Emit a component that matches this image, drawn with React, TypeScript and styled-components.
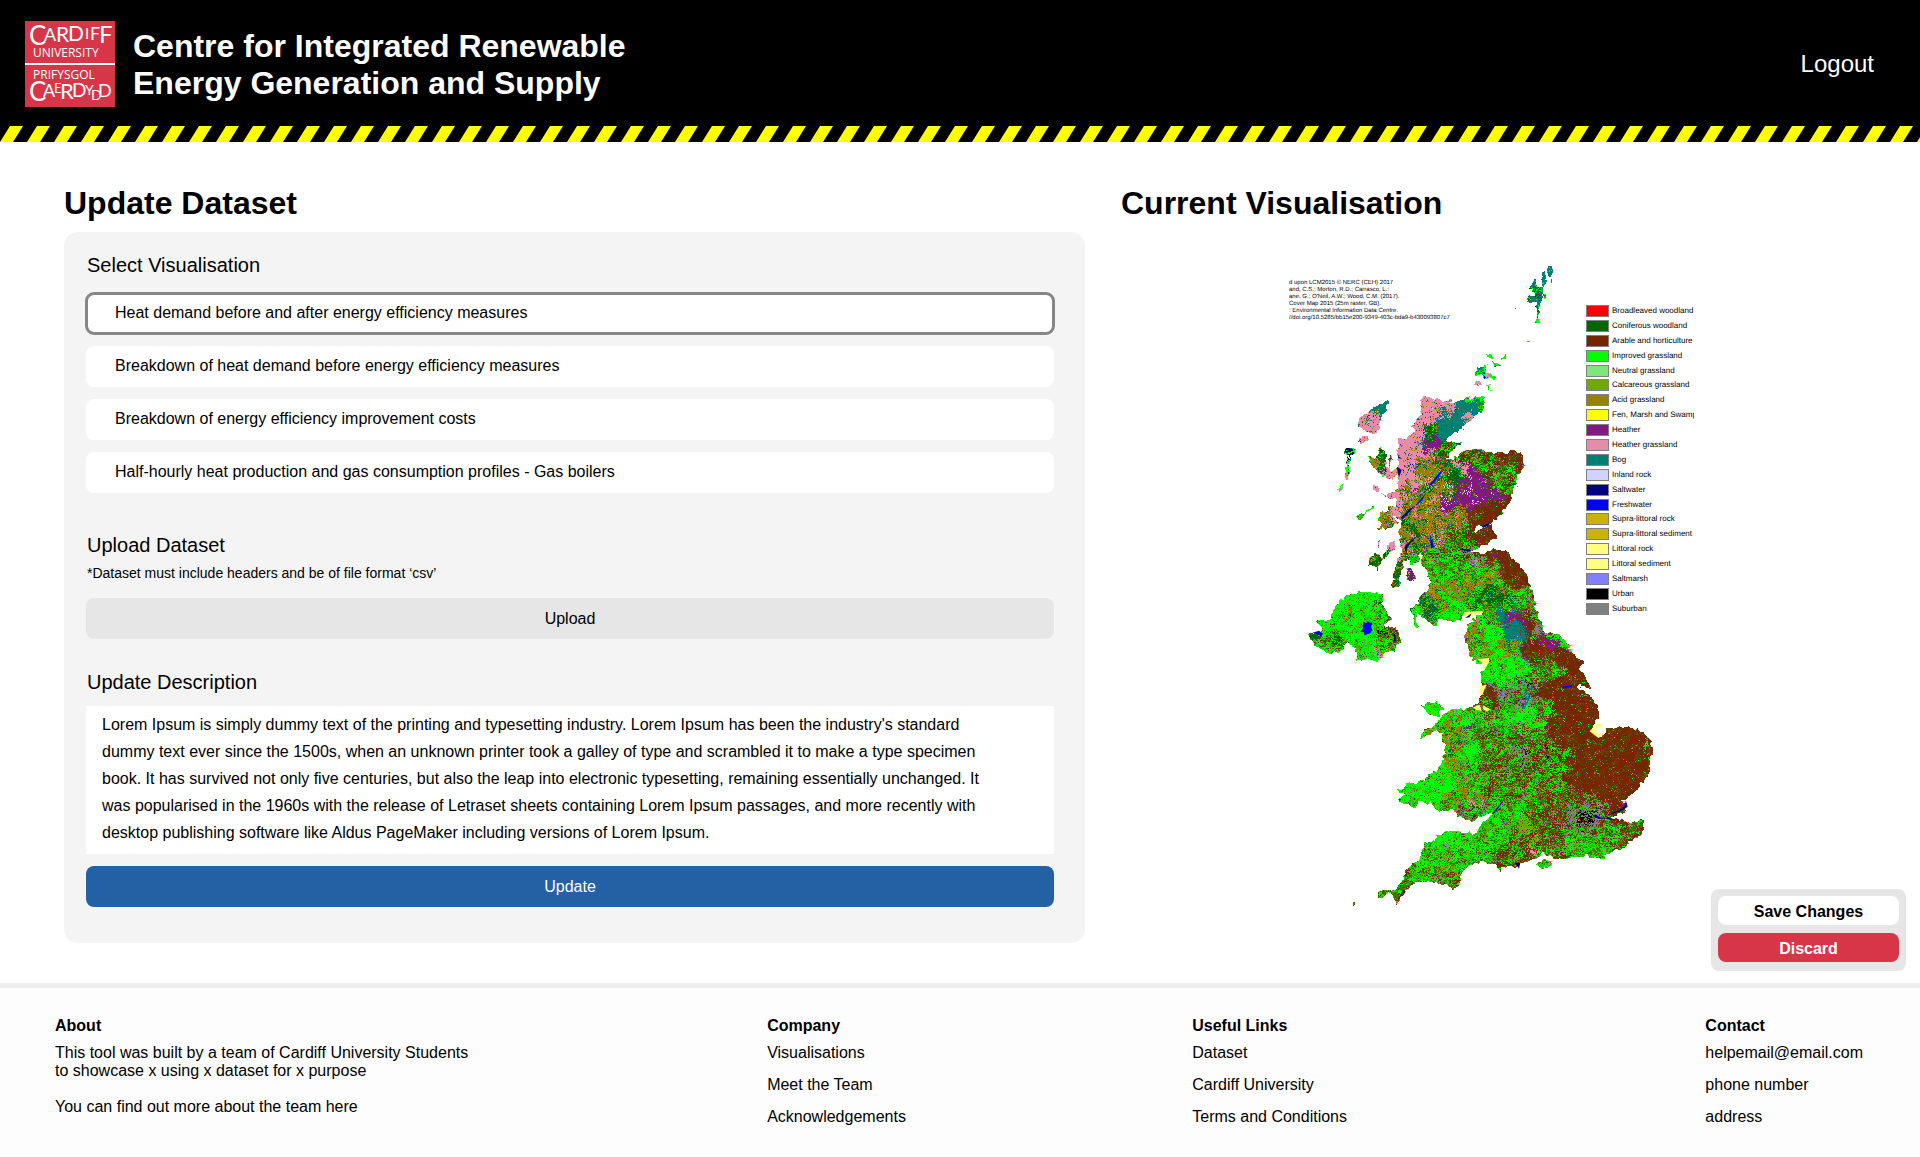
import React, { useMemo, useState } from "react";
import styled, { createGlobalStyle, css } from "styled-components";

const GlobalStyle = createGlobalStyle`
  *, *::before, *::after { box-sizing: border-box; }
  body {
    margin: 0;
    background: #ffffff;
    color: #000000;
    font-family: "Liberation Sans", Arial, Helvetica, sans-serif;
    font-size: 16px;
    line-height: 18px;
  }
  h1, h2, h3, p, ul, figure, fieldset { margin: 0; padding: 0; }
  ul { list-style: none; }
  fieldset { border: 0; min-width: 0; }
  button, textarea { font: inherit; color: inherit; border: 0; }
  a { color: inherit; text-decoration: none; }
`;

/* ---------- header ---------- */

const Header = styled.header`
  display: flex;
  align-items: center;
  gap: 18px;
  padding: 21px 46px 18px 25px;
  background: #000000;
  color: #ffffff;
`;

const SiteTitle = styled.h1`
  flex: 1;
  padding-top: 2px;
  font-size: 32px;
  line-height: 37px;
`;

const LogoutLink = styled.a`
  font-size: 24px;
  line-height: 28px;
`;

const LogoDrawing = styled.svg`
  display: block;
  flex: none;
  font-family: Lato, "Open Sans", sans-serif;
  fill: #ffffff;
`;

const Tape = styled.svg`
  display: block;
  width: 100%;
  height: 17px;
`;

function Logo() {
  return (
    <LogoDrawing width="90" height="86" viewBox="0 0 90 86" role="img" aria-label="Cardiff University">
      <rect width="90" height="86" fill="#d73648" />
      <rect y="42" width="90" height="2" />
      <text y="24" fontSize="26">
        <tspan x="4">C</tspan>
        <tspan fontSize="18" y="20" x="19">A</tspan>
        <tspan fontSize="21" y="21" x="31">R</tspan>
        <tspan fontSize="21" y="20" x="43">D</tspan>
        <tspan fontSize="15" y="18" x="60">I</tspan>
        <tspan fontSize="18" y="19" x="65">F</tspan>
        <tspan fontSize="24" y="22" x="74">F</tspan>
      </text>
      <text x="8" y="36" fontSize="12" fontFamily="Open Sans">UNIVERSITY</text>
      <text x="8" y="58" fontSize="12" fontFamily="Open Sans">PRIFYSGOL</text>
      <text y="80" fontSize="26">
        <tspan x="4">C</tspan>
        <tspan fontSize="18" y="76" x="18">A</tspan>
        <tspan fontSize="13" y="72" x="29">E</tspan>
        <tspan fontSize="22" y="78" x="35">R</tspan>
        <tspan fontSize="19" y="76" x="47">D</tspan>
        <tspan fontSize="14" y="74" x="60">Y</tspan>
        <tspan fontSize="14" y="79" x="66">D</tspan>
        <tspan fontSize="18" y="76" x="73">D</tspan>
      </text>
    </LogoDrawing>
  );
}

function HazardTape() {
  return (
    <Tape aria-hidden="true">
      <defs>
        <pattern id="hazard" width="27" height="17" patternUnits="userSpaceOnUse">
          <rect width="27" height="17" fill="#000000" />
          <polygon points="10,1 23,1 13,17 0,17" fill="#ffff00" />
        </pattern>
      </defs>
      <rect width="100%" height="17" fill="url(#hazard)" />
    </Tape>
  );
}

/* ---------- main area ---------- */

const Main = styled.main`
  position: relative;
  display: grid;
  grid-template-columns: minmax(0, 1021fr) minmax(0, 741fr);
  gap: 36px;
  padding: 43px 58px 40px 64px;
`;

const SectionTitle = styled.h2`
  font-size: 32px;
  line-height: 37px;
  margin-bottom: 10px;
`;

const Panel = styled.form`
  display: flex;
  flex-direction: column;
  gap: 32px;
  padding: 22px 31px 36px 22px;
  border-radius: 14px;
  background: #f4f4f4;
`;

const Group = styled.div`
  display: flex;
  flex-direction: column;
  gap: 12px;
`;

const groupTitle = css`
  display: block;
  padding: 0 1px;
  font-size: 20px;
  line-height: 23px;
  font-weight: 400;
`;

const OptionSet = styled.fieldset`
  padding-bottom: 9px;
`;

const Legend = styled.legend`
  ${groupTitle}
  margin-bottom: 16px;
`;

const GroupHeading = styled.h3`
  ${groupTitle}
`;

const GroupLabel = styled.label`
  ${groupTitle}
`;

const Note = styled.p`
  padding: 0 1px;
  margin: -4px 0 5px;
  font-size: 14px;
  line-height: 16px;
`;

const OptionList = styled.div`
  display: flex;
  flex-direction: column;
  gap: 12px;
`;

const Option = styled.label<{ $selected: boolean }>`
  display: flex;
  align-items: center;
  height: 41px;
  padding: 0 29px 2px;
  border-radius: 8px;
  background: #ffffff;
  outline: ${(p) => (p.$selected ? "3px solid #868686" : "none")};
  outline-offset: -2px;
  cursor: pointer;

  input {
    position: absolute;
    opacity: 0;
    pointer-events: none;
  }
`;

const WideButton = styled.button<{ $primary?: boolean }>`
  height: 41px;
  padding: 1px 0 0;
  border-radius: 8px;
  background: ${(p) => (p.$primary ? "#2460a4" : "#e6e6e6")};
  color: ${(p) => (p.$primary ? "#ffffff" : "#000000")};
  cursor: pointer;
`;

const Description = styled.textarea`
  display: block;
  width: 100%;
  height: 148px;
  padding: 5px 54px 8px 16px;
  background: #ffffff;
  line-height: 27px;
  resize: none;
  overflow: hidden;
`;

/* ---------- map ---------- */

const MapFigure = styled.figure`
  position: relative;
  width: 405px;
  max-width: 100%;
  margin: 33px auto 0;
  overflow: hidden;
`;

const MapDrawing = styled.svg`
  display: block;
  width: 404px;
`;

const Credit = styled.figcaption`
  position: absolute;
  left: 0;
  top: 25px;
  font-size: 6px;
  line-height: 7px;
  text-rendering: geometricPrecision;
  white-space: pre;
`;

const Key = styled.ul`
  position: absolute;
  left: 297px;
  top: 50px;
  display: flex;
  flex-direction: column;
  justify-content: space-between;
  height: 310px;
`;

const KeyRow = styled.li`
  display: flex;
  align-items: center;
  gap: 3px;
  height: 12px;
  font-size: 8px;
  line-height: 10px;
  text-rendering: geometricPrecision;
  white-space: nowrap;
`;

const Swatch = styled.span<{ $color: string }>`
  width: 23px;
  height: 12px;
  border: 1px solid #808080;
  background: ${(p) => p.$color};
`;

const C = {
  red: "#ff0000",
  conifer: "#006600",
  arable: "#732600",
  grass: "#00ff00",
  neutral: "#7fe57f",
  calc: "#70a800",
  acid: "#998100",
  fen: "#ffff00",
  heather: "#801a80",
  pink: "#e68ca6",
  bog: "#008073",
  rock: "#d2d2ff",
  salt: "#000080",
  fresh: "#0000ff",
  supra: "#ccb300",
  sand: "#ffff80",
  marsh: "#8080ff",
  urban: "#000000",
  suburb: "#808080",
  meadow: "#22c400",
  hedge: "#4a7400",
  tilled: "#6a3c06",
};
type Cover = keyof typeof C;

const KEY: [string, string][] = [
  ["Broadleaved woodland", C.red],
  ["Coniferous woodland", C.conifer],
  ["Arable and horticulture", C.arable],
  ["Improved grassland", C.grass],
  ["Neutral grassland", C.neutral],
  ["Calcareous grassland", C.calc],
  ["Acid grassland", C.acid],
  ["Fen, Marsh and Swamp", C.fen],
  ["Heather", C.heather],
  ["Heather grassland", C.pink],
  ["Bog", C.bog],
  ["Inland rock", C.rock],
  ["Saltwater", C.salt],
  ["Freshwater", C.fresh],
  ["Supra-littoral rock", C.supra],
  ["Supra-littoral sediment", C.supra],
  ["Littoral rock", C.sand],
  ["Littoral sediment", C.sand],
  ["Saltmarsh", C.marsh],
  ["Urban", C.urban],
  ["Suburban", C.suburb],
];

/* Coastlines are surveyed on a grid three times finer than the drawing. */
const GRID = 3;
const ORIGIN_X = 90;
const ORIGIN_Y = 45;
const MAP_W = 404;
const MAP_H = 658;

const COASTS = [
  // Great Britain, clockwise from Cape Wrath
  `497,467 515,470 524,480 540,476 548,484 560,482 600,484 625,475 650,470 678,468 672,480 678,505 650,530 625,550
   600,572 575,588 558,600 578,606 607,605 590,622 572,640 563,662 580,662 600,640 625,632 655,628 690,636 730,638
   775,633 795,645 797,670 780,700 770,735 757,765 752,790 735,812 715,832 690,850 655,862 640,880 665,872 695,850
   700,868 715,885 705,900 675,915 655,930 625,932 650,942 680,940 705,925 740,935 765,955 790,990 808,1010
   815,1040 825,1070 832,1110 840,1130 855,1175 895,1185 925,1205 940,1240 972,1263 963,1285 980,1320 1000,1352
   975,1340 955,1333 965,1348 995,1370 1018,1405 1023,1435 1005,1455 995,1475 1020,1490 1038,1485 1038,1465
   1080,1460 1130,1466 1160,1485 1175,1505 1180,1540 1170,1580 1165,1610 1135,1645 1105,1675 1080,1682 1105,1692
   1100,1715 1070,1725 1045,1730 1080,1738 1110,1747 1155,1740 1150,1780 1110,1805 1105,1825 1060,1832 1025,1858
   980,1845 910,1860 875,1848 850,1840 840,1850 805,1862 775,1882 730,1878 725,1900 710,1878 675,1865 630,1878
   608,1900 600,1935 580,1952 560,1932 520,1925 490,1925 460,1932 435,1960 425,1972 410,1990 405,1970 390,1958
   360,1975 360,1955 405,1948 430,1920 440,1892 470,1870 490,1845 497,1810 528,1805 530,1782 590,1775 650,1782
   665,1755 700,1720 670,1725 640,1745 605,1735 580,1708 530,1712 520,1690 490,1685 460,1702 430,1688 418,1678
   440,1665 417,1652 445,1632 490,1622 535,1590 555,1555 558,1520 550,1480 530,1475 505,1488 480,1498 500,1470
   530,1450 550,1425 580,1405 620,1410 660,1390 665,1370 672,1335 668,1300 680,1285 685,1260 650,1275 635,1245
   625,1220 612,1195 622,1165 635,1145 665,1125 665,1118 620,1118 605,1138 575,1145 540,1138 535,1160 505,1142
   484,1126 470,1112 480,1166 472,1164 462,1130 455,1105 470,1102 485,1070 510,1040 513,1020 500,990 488,970
   497,945 482,938 482,965 460,975 445,955 434,968 428,1000 418,1040 395,1045 405,1010 412,975 422,955 430,930
   425,900 420,875 430,845 405,830 385,820 390,803 410,797 412,780 378,765 410,748 422,700 385,712 418,680
   415,640 418,600 450,590 472,572 455,562 475,535 490,510 485,485`,
  // Northern Ireland
  `225,1100 248,1080 275,1062 325,1053 365,1065 370,1090 398,1135 375,1160 410,1160 420,1180 420,1205 405,1232
   375,1238 355,1268 325,1255 295,1263 295,1235 265,1200 245,1235 210,1242 170,1220 145,1180 190,1172 173,1140
   215,1140`,
  // Anglesey, Wight, Scilly
  `505,1388 535,1386 550,1408 538,1428 512,1425 492,1402`,
  `828,1872 855,1860 880,1870 855,1889`,
  `280,1986 290,1984 286,1996 278,1998`,
  // Lewis, Harris, Uists, Barra
  `388,480 385,510 370,530 365,560 345,580 320,575 300,560 300,530 330,515 360,495`,
  `300,600 325,583 328,598 305,609`,
  `252,627 292,620 285,645 262,645`,
  `262,648 277,650 275,672 262,676`,
  `260,678 273,676 270,718 257,712`,
  `240,748 256,730 258,738 243,758`,
  // Skye and the Small Isles
  `322,642 350,658 358,640 365,625 382,640 380,680 412,700 402,722 390,715 372,708 350,688 330,665`,
  `347,738 365,740 360,754 350,750`,
  `368,758 378,762 374,768`,
  `394,645 400,650 390,686 386,680`,
  // Mull, Coll, Tiree
  `360,815 385,810 400,830 417,846 400,865 350,870 372,850 358,838`,
  `340,798 344,802 322,820 304,836 288,832 292,824 312,822`,
  // Jura, Islay, Arran, Bute
  `410,898 404,930 375,962 368,948 392,908`,
  `356,908 366,902 358,922`,
  `330,960 336,948 352,938 372,962 352,992 342,978 330,976`,
  `445,980 460,982 468,1008 462,1026 446,1020 440,1003`,
  `470,945 478,955 474,965`,
  // Orkney
  `655,380 676,377 682,398 700,412 684,420 668,404 652,404`,
  `648,418 662,424 666,438 654,440`,
  `680,345 698,350 700,362 686,356`,
  `690,400 712,412 708,422 694,414`,
  `700,366 722,380 716,384 704,376`,
  `724,362 742,338 734,360`,
  `684,432 692,430 690,448`,
  `676,372 684,372 684,382 676,380`,
  // Fair Isle, Foula
  `766,200 772,202 770,208`,
  `806,308 812,308 810,314`,
  // Shetland
  `818,128 830,118 836,140 850,142 852,156 846,180 842,215 840,250 832,246 836,212 832,186 806,184 806,172 826,168
   824,150 812,142`,
  `850,100 860,98 862,125 854,140 846,136`,
  `870,80 880,80 880,98 872,112 866,98`,
  `868,118 882,120 878,126`,
  `852,160 862,164 856,178`,
];

/* Land-cover zones: centre, reach, and the share of each cover found there. */
type Zone = [number, number, number, Partial<Record<Cover, number>>];
const pinkHills = { pink: 60, acid: 8, bog: 5, heather: 5, salt: 2, conifer: 4, rock: 2 };
const bogland = { bog: 85, conifer: 5, pink: 3, heather: 2 };
const highland = { acid: 40, conifer: 16, pink: 14, bog: 6, heather: 5, fresh: 2, rock: 3, grass: 4, hedge: 10 };
const moor = { heather: 72, conifer: 6, acid: 8, rock: 3, bog: 3 };
const scotFarm = { grass: 16, arable: 24, conifer: 14, calc: 8, suburb: 2, red: 1, heather: 1, hedge: 22, meadow: 14 };
const arableLand = { arable: 62, tilled: 28, grass: 4, calc: 3, suburb: 3, red: 2, conifer: 2, hedge: 10 };
const pasture = { grass: 56, meadow: 26, calc: 7, suburb: 4, acid: 4, conifer: 5, arable: 5, red: 1, hedge: 10 };
const mixed = { grass: 18, meadow: 16, arable: 20, tilled: 12, hedge: 26, calc: 8, suburb: 7, conifer: 5, red: 2 };
const westFields = { grass: 28, meadow: 26, hedge: 24, calc: 8, arable: 10, conifer: 5, red: 2, suburb: 4 };
const uplands = { acid: 40, grass: 18, conifer: 14, pink: 4, bog: 4, heather: 4, hedge: 12, meadow: 8 };
const forest = { conifer: 50, acid: 14, bog: 12, grass: 10, heather: 2, hedge: 8 };
const town = { urban: 80, suburb: 14 };
const suburbs = { suburb: 34, urban: 4, grass: 14, arable: 16, conifer: 5, hedge: 22, meadow: 8 };
const southFields = { arable: 26, tilled: 16, grass: 12, meadow: 12, hedge: 22, calc: 8, red: 5, suburb: 6, conifer: 5 };

const ZONES: Zone[] = [
  [505, 510, 1.1, pinkHills], [560, 495, 0.8, pinkHills], [470, 560, 1, pinkHills], [440, 620, 1.1, pinkHills],
  [440, 680, 1, pinkHills], [480, 640, 0.8, pinkHills], [450, 740, 0.7, pinkHills], [410, 800, 0.7, pinkHills],
  [560, 550, 1, bogland], [600, 515, 1, bogland], [640, 505, 0.8, bogland], [620, 545, 0.4, pinkHills],
  [655, 478, 0.6, pasture], [670, 500, 0.3, pasture], [520, 575, 0.6, forest], [540, 610, 0.7, moor],
  [570, 625, 0.6, scotFarm], [500, 690, 1, highland], [470, 760, 1.1, highland], [520, 740, 1, highland],
  [530, 800, 1, highland], [500, 840, 1.1, highland], [550, 860, 1, highland], [570, 700, 0.7, forest],
  [610, 690, 0.6, pinkHills], [575, 690, 0.4, bogland], [650, 700, 1, moor], [640, 760, 1.1, moor],
  [700, 765, 1, moor], [590, 780, 0.9, moor], [600, 820, 0.7, highland], [625, 740, 0.35, { rock: 80, heather: 20 }],
  [575, 775, 0.35, { rock: 70, heather: 20 }], [655, 775, 0.25, { rock: 70, heather: 20 }],
  [555, 735, 0.25, { rock: 60, bog: 20 }], [640, 660, 1, scotFarm], [700, 670, 1, scotFarm],
  [745, 690, 1, scotFarm], [735, 735, 0.9, scotFarm], [770, 650, 0.8, arableLand], [720, 650, 0.5, arableLand],
  [725, 800, 0.9, arableLand], [690, 825, 0.8, arableLand], [650, 840, 0.7, arableLand], [620, 860, 0.7, scotFarm],
  [580, 900, 0.8, scotFarm], [690, 885, 0.8, arableLand], [430, 900, 0.8, highland], [460, 890, 0.8, forest],
  [420, 1000, 0.7, forest], [500, 900, 0.7, highland], [540, 960, 0.4, suburbs], [640, 950, 0.5, suburbs],
  [520, 990, 0.9, westFields], [570, 1000, 0.9, westFields], [620, 980, 0.7, westFields], [710, 945, 0.7, arableLand],
  [740, 975, 0.8, arableLand], [710, 960, 0.3, moor], [780, 1010, 0.9, arableLand], [630, 970, 0.3, pinkHills],
  [580, 1040, 0.8, uplands], [640, 1020, 0.9, uplands], [700, 1010, 0.8, uplands], [660, 1060, 0.6, forest],
  [720, 1075, 0.7, forest], [760, 1040, 0.7, uplands], [500, 1095, 0.8, forest], [540, 1070, 0.7, uplands],
  [570, 1110, 0.8, pasture], [620, 1085, 0.6, westFields], [480, 1130, 0.5, pasture], [780, 1090, 0.7, westFields],
  [810, 1110, 0.8, mixed], [690, 1110, 0.7, westFields], [730, 1130, 0.4, bogland], [750, 1170, 0.5, bogland],
  [770, 1205, 0.4, bogland], [775, 1140, 0.35, moor], [800, 1160, 0.7, arableLand], [830, 1180, 0.6, suburbs],
  [660, 1185, 0.9, uplands], [650, 1215, 0.7, uplands], [710, 1180, 0.7, pasture], [790, 1260, 0.3, moor],
  [785, 1265, 0.3, bogland], [720, 1285, 0.3, moor], [690, 1300, 0.8, pasture], [740, 1240, 0.7, uplands],
  [710, 1260, 0.7, pasture], [760, 1290, 0.8, pasture], [820, 1230, 0.9, arableLand], [885, 1215, 0.45, moor],
  [910, 1200, 0.5, pasture], [930, 1260, 1.1, arableLand], [870, 1280, 1, mixed], [690, 1365, 0.7, arableLand],
  [700, 1330, 0.5, suburbs], [760, 1330, 0.6, suburbs], [745, 1380, 0.5, suburbs], [775, 1340, 0.3, bogland],
  [790, 1375, 0.3, bogland], [820, 1330, 0.12, town], [745, 1382, 0.2, town], [800, 1325, 0.12, town],
  [835, 1395, 0.5, suburbs], [838, 1398, 0.12, town], [840, 1340, 0.4, suburbs], [880, 1340, 1, arableLand],
  [930, 1380, 1, arableLand], [970, 1420, 1, arableLand], [900, 1450, 1, arableLand], [960, 1500, 1.1, arableLand],
  [1050, 1520, 1.1, arableLand], [1120, 1510, 1, arableLand], [1060, 1600, 1.2, arableLand],
  [980, 1600, 1.1, arableLand], [1130, 1590, 0.9, arableLand], [1060, 1558, 0.2, forest], [1165, 1520, 0.3, pasture],
  [860, 1400, 0.7, mixed], [520, 1405, 1, pasture], [565, 1440, 0.7, uplands], [610, 1430, 0.6, pasture],
  [610, 1450, 0.3, moor], [640, 1470, 0.8, westFields], [575, 1500, 0.7, uplands], [620, 1530, 0.8, pasture],
  [590, 1580, 0.7, uplands], [590, 1540, 0.3, forest], [640, 1600, 0.8, westFields], [540, 1620, 0.9, pasture],
  [470, 1660, 1, pasture], [600, 1670, 0.7, uplands], [650, 1660, 0.6, uplands], [645, 1680, 0.25, pinkHills],
  [560, 1700, 0.5, westFields], [640, 1720, 0.5, suburbs], [680, 1410, 0.7, mixed], [720, 1440, 0.9, westFields],
  [800, 1430, 0.9, pasture], [750, 1480, 0.8, mixed], [700, 1500, 0.9, mixed], [770, 1540, 0.26, town],
  [788, 1555, 0.2, town], [775, 1545, 0.45, suburbs], [800, 1540, 0.5, suburbs], [820, 1500, 0.8, mixed],
  [865, 1475, 0.25, suburbs], [868, 1475, 0.1, town], [868, 1528, 0.14, town], [850, 1560, 0.9, mixed],
  [720, 1590, 1, mixed], [800, 1620, 1, mixed], [880, 1620, 1, mixed], [900, 1540, 0.7, mixed],
  [730, 1660, 0.8, mixed], [820, 1680, 0.9, mixed], [900, 1690, 0.9, southFields], [860, 1720, 0.9, southFields],
  [715, 1680, 0.25, { red: 40, conifer: 20, grass: 30 }], [710, 1740, 0.6, westFields],
  [710, 1735, 0.25, suburbs], [712, 1732, 0.12, town], [700, 1790, 0.9, westFields], [770, 1710, 0.6, westFields],
  [795, 1775, 0.4, { calc: 60, arable: 20, grass: 15 }], [860, 1780, 0.9, southFields],
  [780, 1830, 0.8, southFields], [820, 1845, 0.35, { pink: 40, heather: 30, red: 25 }],
  [720, 1850, 0.7, southFields], [660, 1830, 0.8, westFields], [910, 1770, 0.4, suburbs],
  [985, 1725, 0.32, town], [1000, 1722, 0.2, town], [970, 1718, 0.2, town], [965, 1725, 0.6, suburbs],
  [1005, 1700, 0.5, suburbs], [990, 1755, 0.5, suburbs], [1030, 1720, 0.4, suburbs], [960, 1800, 0.9, westFields],
  [1020, 1820, 0.8, westFields], [1050, 1780, 0.8, mixed], [1110, 1770, 0.8, southFields],
  [1080, 1660, 0.8, arableLand], [560, 1800, 0.8, pasture], [610, 1790, 0.7, westFields], [530, 1840, 0.8, westFields],
  [600, 1850, 0.8, westFields], [560, 1880, 0.5, uplands], [552, 1880, 0.2, bogland], [570, 1920, 0.8, mixed],
  [490, 1880, 0.7, westFields], [440, 1930, 0.7, mixed], [390, 1960, 0.7, mixed], [850, 1875, 0.5, westFields],
  [270, 1100, 0.9, pasture], [330, 1090, 0.8, pasture], [360, 1100, 0.4, forest], [260, 1128, 0.4, uplands],
  [230, 1150, 0.8, pasture], [200, 1200, 0.8, westFields], [230, 1210, 0.4, forest], [300, 1200, 1, pasture],
  [340, 1220, 0.8, pasture], [360, 1250, 0.3, { pink: 50, heather: 20, grass: 20 }], [370, 1170, 0.15, town],
  [395, 1200, 0.6, mixed], [160, 1185, 0.4, forest], [180, 1140, 0.4, forest],
  [365, 510, 0.9, bogland], [330, 550, 0.9, pinkHills], [310, 595, 0.6, pinkHills],
  [272, 630, 0.5, { salt: 25, bog: 30, grass: 25, fen: 12 }], [268, 660, 0.5, { grass: 60, bog: 20, salt: 10 }],
  [264, 700, 0.5, { pink: 45, grass: 40 }], [250, 745, 0.4, { pink: 30, grass: 40, supra: 10 }],
  [345, 660, 0.6, uplands], [370, 650, 0.6, forest], [390, 700, 0.6, pinkHills], [356, 745, 0.4, pinkHills],
  [380, 840, 0.8, highland], [315, 825, 0.5, pasture], [390, 930, 0.7, pinkHills], [350, 965, 0.6, forest],
  [453, 1003, 0.5, { heather: 30, pink: 30, conifer: 30 }], [666, 390, 0.5, { grass: 40, bog: 30, fresh: 10 }],
  [655, 430, 0.4, pinkHills], [700, 380, 0.6, pasture], [769, 204, 0.2, pinkHills], [809, 311, 0.2, uplands],
  [835, 160, 0.7, { bog: 55, conifer: 12, grass: 12, heather: 12, salt: 8 }],
  [855, 120, 0.5, bogland], [838, 235, 0.4, { grass: 60, bog: 20 }], [874, 95, 0.4, { bog: 60, grass: 25 }],
];

/* Water, estuaries and sands drawn over the land cover. */
const FEATURES: { fill: string; points: string }[] = [
  { fill: C.fresh, points: "312,1144 322,1150 326,1142 332,1148 340,1148 336,1160 340,1170 334,1180 316,1186 314,1176 304,1176 312,1164" },
  { fill: C.fresh, points: "160,1178 180,1172 190,1180 188,1192 180,1184" },
  { fill: C.salt, points: "402,1178 409,1184 410,1202 403,1210 405,1194" },
  { fill: C.salt, points: "425,834 450,808 466,798 448,820 432,838" },
  { fill: C.fresh, points: "510,735 540,700 552,684 542,706 518,736" },
  { fill: C.fresh, points: "466,800 500,760 512,738 490,780" },
  { fill: C.salt, points: "442,946 436,922 452,905 480,882 456,908 444,924" },
  { fill: C.fresh, points: "512,880 520,905 526,920 516,926 514,904" },
  { fill: C.salt, points: "414,680 428,690 420,712 416,700" },
  { fill: C.salt, points: "414,636 420,650 430,656 418,655" },
  { fill: C.salt, points: "668,858 690,850 692,856 672,864" },
  { fill: C.salt, points: "600,924 636,930 634,936 604,929" },
  { fill: C.sand, points: "614,1116 670,1113 672,1119 640,1128 616,1126" },
  { fill: C.salt, points: "618,1134 638,1120 632,1132" },
  { fill: C.sand, points: "655,1258 690,1254 690,1266 676,1290 666,1286 676,1272" },
  { fill: C.sand, points: "664,1338 682,1334 670,1366 662,1364" },
  { fill: C.sand, points: "642,1402 662,1394 668,1412 652,1410" },
  { fill: C.sand, points: "672,1396 694,1408 684,1414 672,1408" },
  { fill: C.sand, points: "992,1474 1014,1448 1026,1452 1034,1484 1018,1494" },
  { fill: "#ffffff", points: "1008,1468 1026,1462 1034,1476 1018,1484" },
  { fill: C.fresh, points: "910,1340 940,1336 938,1342 912,1343" },
  { fill: C.salt, points: "1100,1680 1106,1700 1088,1712 1040,1728 1070,1740 1042,1738 1044,1726 1080,1710 1098,1698" },
  { fill: C.salt, points: "1000,1728 1010,1724 1024,1732 1048,1734 1020,1737" },
  { fill: C.fresh, points: "698,1722 734,1680 726,1694 704,1722" },
  { fill: "#ffffff", points: "650,1738 700,1718 688,1736 664,1746 662,1760 650,1752" },
  { fill: C.salt, points: "766,1868 784,1868 780,1886 774,1878" },
  { fill: C.salt, points: "432,1950 440,1954 434,1966" },
];

const toPoints = (text: string): [number, number][] =>
  text.trim().split(/\s+/).map((pair) => {
    const [x, y] = pair.split(",").map(Number);
    return [(x - ORIGIN_X) / GRID, (y - ORIGIN_Y) / GRID];
  });

const hash = (x: number, y: number, seed: number) => {
  let h = (x * 374761393 + y * 668265263 + seed * 974634777) | 0;
  h = Math.imul(h ^ (h >>> 13), 1274126177);
  h = Math.imul(h ^ (h >>> 15), 2246822519);
  return ((h ^ (h >>> 16)) >>> 0) / 4294967296;
};

const smooth = (x: number, y: number, size: number, seed: number) => {
  const gx = Math.floor(x / size);
  const gy = Math.floor(y / size);
  const fx = x / size - gx;
  const fy = y / size - gy;
  const top = hash(gx, gy, seed) * (1 - fx) + hash(gx + 1, gy, seed) * fx;
  const low = hash(gx, gy + 1, seed) * (1 - fx) + hash(gx + 1, gy + 1, seed) * fx;
  return top * (1 - fy) + low * fy;
};

const inside = (x: number, y: number, poly: [number, number][]) => {
  let hit = false;
  for (let i = 0, j = poly.length - 1; i < poly.length; j = i++) {
    const [xi, yi] = poly[i];
    const [xj, yj] = poly[j];
    if (yi > y !== yj > y && x < ((xj - xi) * (y - yi)) / (yj - yi) + xi) hit = !hit;
  }
  return hit;
};

function surveyLand() {
  const paths: Record<string, string[]> = {};
  const coasts = COASTS.map((text) => {
    const points = toPoints(text);
    const xs = points.map((p) => p[0]);
    const ys = points.map((p) => p[1]);
    return { points, x0: Math.min(...xs) - 2, x1: Math.max(...xs) + 2, y0: Math.min(...ys) - 2, y1: Math.max(...ys) + 2 };
  });
  const zones = ZONES.map(([x, y, reach, mix]) => ({
    x: (x - ORIGIN_X) / GRID,
    y: (y - ORIGIN_Y) / GRID,
    reach: reach * reach,
    mix: (Object.keys(mix) as Cover[]).map((cover) => ({
      cover,
      seed: Object.keys(C).indexOf(cover) + 20,
      share: Math.log(mix[cover] as number),
    })),
  }));

  for (let y = 0; y < MAP_H; y++) {
    const near = coasts.filter((c) => y >= c.y0 && y <= c.y1);
    let run: string | null = null;
    let start = 0;
    for (let x = 0; x <= MAP_W; x++) {
      const ex = x + 0.5 + (smooth(x, y, 3, 1) - 0.5) * 4;
      const ey = y + 0.5 + (smooth(x, y, 3, 2) - 0.5) * 4;
      let cover: string | null = null;
      if (near.some((c) => x >= c.x0 && x <= c.x1 && inside(ex, ey, c.points))) {
        const wx = x + (smooth(x, y, 9, 3) - 0.5) * 22 + (hash(x, y, 5) - 0.5) * 7;
        const wy = y + (smooth(x, y, 9, 4) - 0.5) * 22 + (hash(x, y, 6) - 0.5) * 7;
        let zone = zones[0];
        let best = Infinity;
        for (const z of zones) {
          const d = ((z.x - wx) ** 2 + (z.y - wy) ** 2) / z.reach;
          if (d < best) {
            best = d;
            zone = z;
          }
        }
        let top = -Infinity;
        for (const m of zone.mix) {
          const white = -Math.log(-Math.log(hash(x, y, m.seed) * 0.998 + 0.001));
          const score = m.share + white * 0.6 + smooth(x + y * 0.4, y - x * 0.3, 4, m.seed + 40) * 2.6;
          if (score > top) {
            top = score;
            cover = m.cover;
          }
        }
      }
      if (cover !== run) {
        if (run) (paths[run] ||= []).push(`M${start} ${y}h${x - start}v1h${start - x}z`);
        run = cover;
        start = x;
      }
    }
  }
  return Object.entries(paths).map(([cover, parts]) => ({ fill: C[cover as Cover], d: parts.join("") }));
}

const CREDIT = [
  "d upon LCM2015 © NERC (CEH) 2017",
  "and, C.S.; Morton, R.D.; Carrasco, L.;",
  "ane, G.; O'Neil, A.W.; Wood, C.M. (2017).",
  "Cover Map 2015 (25m raster, GB).",
  ": Environmental Information Data Centre.",
  "//doi.org/10.5285/bb15e200-9349-403c-bda9-b430093807c7",
].join("\n");

function LandCoverMap() {
  const layers = useMemo(surveyLand, []);
  return (
    <MapFigure>
      <MapDrawing viewBox={`0 0 ${MAP_W} ${MAP_H}`} role="img" aria-label="Land cover map">
        {layers.map((layer) => (
          <path key={layer.fill} d={layer.d} fill={layer.fill} />
        ))}
        {FEATURES.map((f) => (
          <polygon key={f.points} fill={f.fill} points={toPoints(f.points).join(" ")} />
        ))}
      </MapDrawing>
      <Credit>{CREDIT}</Credit>
      <Key>
        {KEY.map(([name, color]) => (
          <KeyRow key={name}>
            <Swatch $color={color} />
            {name}
          </KeyRow>
        ))}
      </Key>
    </MapFigure>
  );
}

/* ---------- floating actions ---------- */

const Actions = styled.div`
  position: absolute;
  right: 14px;
  bottom: 12px;
  display: flex;
  flex-direction: column;
  gap: 8px;
  width: 195px;
  padding: 7px 7px 9px;
  border-radius: 8px;
  background: #e6e6e6;
`;

const ActionButton = styled.button<{ $danger?: boolean }>`
  height: 29px;
  padding: 2px 0 0;
  border-radius: 8px;
  font-weight: 700;
  background: ${(p) => (p.$danger ? "#d73648" : "#ffffff")};
  color: ${(p) => (p.$danger ? "#ffffff" : "#000000")};
  cursor: pointer;
`;

/* ---------- footer ---------- */

const Footer = styled.footer`
  display: grid;
  grid-template-columns: 712fr 425fr 513fr auto;
  padding: 29px 57px 32px 55px;
  border-top: 5px solid #eeeeee;
  background: #fdfdfd;
`;

const FooterTitle = styled.h3`
  margin-bottom: 9px;
  font-size: 16px;
  line-height: 18px;
`;

const FooterText = styled.p`
  white-space: pre-line;
  margin-bottom: 18px;
`;

const LinkList = styled.ul`
  display: flex;
  flex-direction: column;
  gap: 14px;
`;

const LINKS = [
  { title: "Company", items: ["Visualisations", "Meet the Team", "Acknowledgements"] },
  { title: "Useful Links", items: ["Dataset", "Cardiff University", "Terms and Conditions"] },
  { title: "Contact", items: ["helpemail@email.com", "phone number", "address"] },
];

const OPTIONS = [
  "Heat demand before and after energy efficiency measures",
  "Breakdown of heat demand before energy efficiency measures",
  "Breakdown of energy efficiency improvement costs",
  "Half-hourly heat production and gas consumption profiles - Gas boilers",
];

const LOREM =
  "Lorem Ipsum is simply dummy text of the printing and typesetting industry. Lorem Ipsum has been the industry's standard dummy text ever since the 1500s, when an unknown printer took a galley of type and scrambled it to make a type specimen book. It has survived not only five centuries, but also the leap into electronic typesetting, remaining essentially unchanged. It was popularised in the 1960s with the release of Letraset sheets containing Lorem Ipsum passages, and more recently with desktop publishing software like Aldus PageMaker including versions of Lorem Ipsum.";

export default function App() {
  const [selected, setSelected] = useState(0);
  return (
    <>
      <GlobalStyle />
      <Header>
        <Logo />
        <SiteTitle>
          Centre for Integrated Renewable
          <br />
          Energy Generation and Supply
        </SiteTitle>
        <LogoutLink href="#logout">Logout</LogoutLink>
      </Header>
      <HazardTape />
      <Main>
        <section>
          <SectionTitle>Update Dataset</SectionTitle>
          <Panel onSubmit={(e) => e.preventDefault()}>
            <OptionSet>
              <Legend>Select Visualisation</Legend>
              <OptionList>
                {OPTIONS.map((name, i) => (
                  <Option key={name} $selected={i === selected}>
                    <input type="radio" name="visualisation" checked={i === selected} onChange={() => setSelected(i)} />
                    {name}
                  </Option>
                ))}
              </OptionList>
            </OptionSet>
            <Group>
              <GroupHeading>Upload Dataset</GroupHeading>
              <Note>*Dataset must include headers and be of file format ‘csv’</Note>
              <WideButton type="button">Upload</WideButton>
            </Group>
            <Group>
              <GroupLabel htmlFor="description">Update Description</GroupLabel>
              <Description id="description" defaultValue={LOREM} spellCheck={false} />
              <WideButton type="submit" $primary>
                Update
              </WideButton>
            </Group>
          </Panel>
        </section>
        <section>
          <SectionTitle>Current Visualisation</SectionTitle>
          <LandCoverMap />
        </section>
        <Actions>
          <ActionButton type="button">Save Changes</ActionButton>
          <ActionButton type="button" $danger>
            Discard
          </ActionButton>
        </Actions>
      </Main>
      <Footer>
        <section>
          <FooterTitle>About</FooterTitle>
          <FooterText>{"This tool was built by a team of Cardiff University Students\nto showcase x using x dataset for x purpose"}</FooterText>
          <FooterText>
            You can find out more about the team <a href="#team">here</a>
          </FooterText>
        </section>
        {LINKS.map((group) => (
          <nav key={group.title} aria-label={group.title}>
            <FooterTitle>{group.title}</FooterTitle>
            <LinkList>
              {group.items.map((item) => (
                <li key={item}>
                  <a href="#page">{item}</a>
                </li>
              ))}
            </LinkList>
          </nav>
        ))}
      </Footer>
    </>
  );
}
